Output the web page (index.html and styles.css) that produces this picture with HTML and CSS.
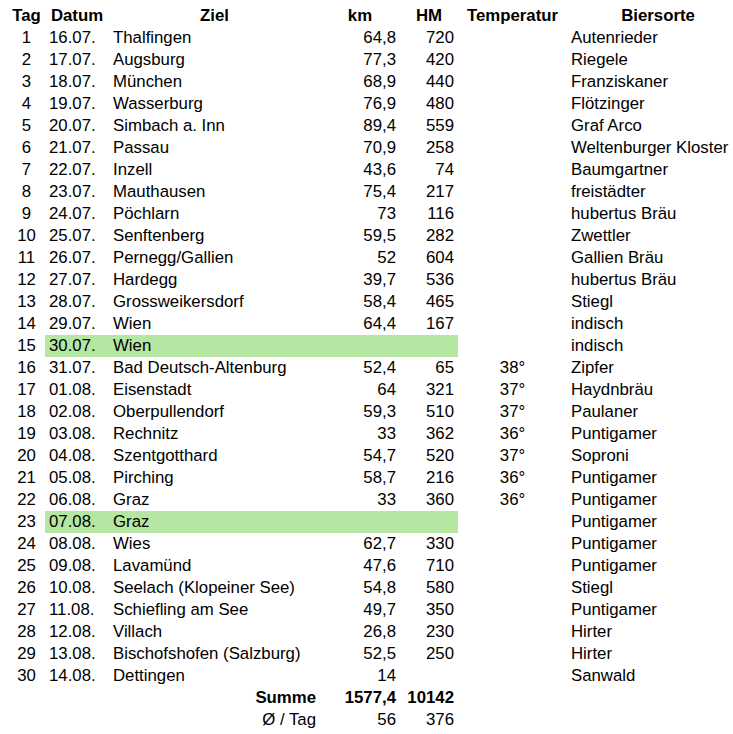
FILE: index.html
```html
<!DOCTYPE html>
<html lang="de">
<head>
<meta charset="utf-8">
<title>Tour</title>
<link rel="stylesheet" href="styles.css">
</head>
<body>
<table class="tour">
<colgroup>
<col class="c-tag"><col class="c-datum"><col class="c-ziel"><col class="c-km"><col class="c-hm"><col class="c-temp"><col class="c-bier">
</colgroup>
<thead>
<tr><th>Tag</th><th>Datum</th><th>Ziel</th><th>km</th><th>HM</th><th>Temperatur</th><th>Biersorte</th></tr>
</thead>
<tbody>
<tr><td class="tag">1</td><td>16.07.</td><td>Thalfingen</td><td class="num">64,8</td><td class="num">720</td><td class="temp"></td><td>Autenrieder</td></tr>
<tr><td class="tag">2</td><td>17.07.</td><td>Augsburg</td><td class="num">77,3</td><td class="num">420</td><td class="temp"></td><td>Riegele</td></tr>
<tr><td class="tag">3</td><td>18.07.</td><td>München</td><td class="num">68,9</td><td class="num">440</td><td class="temp"></td><td>Franziskaner</td></tr>
<tr><td class="tag">4</td><td>19.07.</td><td>Wasserburg</td><td class="num">76,9</td><td class="num">480</td><td class="temp"></td><td>Flötzinger</td></tr>
<tr><td class="tag">5</td><td>20.07.</td><td>Simbach a. Inn</td><td class="num">89,4</td><td class="num">559</td><td class="temp"></td><td>Graf Arco</td></tr>
<tr><td class="tag">6</td><td>21.07.</td><td>Passau</td><td class="num">70,9</td><td class="num">258</td><td class="temp"></td><td>Weltenburger Kloster</td></tr>
<tr><td class="tag">7</td><td>22.07.</td><td>Inzell</td><td class="num">43,6</td><td class="num">74</td><td class="temp"></td><td>Baumgartner</td></tr>
<tr><td class="tag">8</td><td>23.07.</td><td>Mauthausen</td><td class="num">75,4</td><td class="num">217</td><td class="temp"></td><td>freistädter</td></tr>
<tr><td class="tag">9</td><td>24.07.</td><td>Pöchlarn</td><td class="num">73</td><td class="num">116</td><td class="temp"></td><td>hubertus Bräu</td></tr>
<tr><td class="tag">10</td><td>25.07.</td><td>Senftenberg</td><td class="num">59,5</td><td class="num">282</td><td class="temp"></td><td>Zwettler</td></tr>
<tr><td class="tag">11</td><td>26.07.</td><td>Pernegg/Gallien</td><td class="num">52</td><td class="num">604</td><td class="temp"></td><td>Gallien Bräu</td></tr>
<tr><td class="tag">12</td><td>27.07.</td><td>Hardegg</td><td class="num">39,7</td><td class="num">536</td><td class="temp"></td><td>hubertus Bräu</td></tr>
<tr><td class="tag">13</td><td>28.07.</td><td>Grossweikersdorf</td><td class="num">58,4</td><td class="num">465</td><td class="temp"></td><td>Stiegl</td></tr>
<tr><td class="tag">14</td><td>29.07.</td><td>Wien</td><td class="num">64,4</td><td class="num">167</td><td class="temp"></td><td>indisch</td></tr>
<tr class="rest"><td class="tag">15</td><td class="g">30.07.</td><td class="g">Wien</td><td class="g num"></td><td class="g num"></td><td class="temp"></td><td>indisch</td></tr>
<tr><td class="tag">16</td><td>31.07.</td><td>Bad Deutsch-Altenburg</td><td class="num">52,4</td><td class="num">65</td><td class="temp">38°</td><td>Zipfer</td></tr>
<tr><td class="tag">17</td><td>01.08.</td><td>Eisenstadt</td><td class="num">64</td><td class="num">321</td><td class="temp">37°</td><td>Haydnbräu</td></tr>
<tr><td class="tag">18</td><td>02.08.</td><td>Oberpullendorf</td><td class="num">59,3</td><td class="num">510</td><td class="temp">37°</td><td>Paulaner</td></tr>
<tr><td class="tag">19</td><td>03.08.</td><td>Rechnitz</td><td class="num">33</td><td class="num">362</td><td class="temp">36°</td><td>Puntigamer</td></tr>
<tr><td class="tag">20</td><td>04.08.</td><td>Szentgotthard</td><td class="num">54,7</td><td class="num">520</td><td class="temp">37°</td><td>Soproni</td></tr>
<tr><td class="tag">21</td><td>05.08.</td><td>Pirching</td><td class="num">58,7</td><td class="num">216</td><td class="temp">36°</td><td>Puntigamer</td></tr>
<tr><td class="tag">22</td><td>06.08.</td><td>Graz</td><td class="num">33</td><td class="num">360</td><td class="temp">36°</td><td>Puntigamer</td></tr>
<tr class="rest"><td class="tag">23</td><td class="g">07.08.</td><td class="g">Graz</td><td class="g num"></td><td class="g num"></td><td class="temp"></td><td>Puntigamer</td></tr>
<tr><td class="tag">24</td><td>08.08.</td><td>Wies</td><td class="num">62,7</td><td class="num">330</td><td class="temp"></td><td>Puntigamer</td></tr>
<tr><td class="tag">25</td><td>09.08.</td><td>Lavamünd</td><td class="num">47,6</td><td class="num">710</td><td class="temp"></td><td>Puntigamer</td></tr>
<tr><td class="tag">26</td><td>10.08.</td><td>Seelach (Klopeiner See)</td><td class="num">54,8</td><td class="num">580</td><td class="temp"></td><td>Stiegl</td></tr>
<tr><td class="tag">27</td><td>11.08.</td><td>Schiefling am See</td><td class="num">49,7</td><td class="num">350</td><td class="temp"></td><td>Puntigamer</td></tr>
<tr><td class="tag">28</td><td>12.08.</td><td>Villach</td><td class="num">26,8</td><td class="num">230</td><td class="temp"></td><td>Hirter</td></tr>
<tr><td class="tag">29</td><td>13.08.</td><td>Bischofshofen (Salzburg)</td><td class="num">52,5</td><td class="num">250</td><td class="temp"></td><td>Hirter</td></tr>
<tr><td class="tag">30</td><td>14.08.</td><td>Dettingen</td><td class="num">14</td><td class="num"></td><td class="temp"></td><td>Sanwald</td></tr>
<tr class="sum"><td></td><td></td><td class="num">Summe</td><td class="num">1577,4</td><td class="num">10142</td><td></td><td></td></tr>
<tr><td></td><td></td><td class="num">Ø / Tag</td><td class="num">56</td><td class="num">376</td><td></td><td></td></tr>
</tbody>
</table>
</body>
</html>
```
FILE: styles.css
```css
html {
  overflow: hidden;
  background: #ffffff;
}
body {
  margin: 0;
  padding: 5px 0 0 8px;
  font-family: "Liberation Sans", Arial, sans-serif;
  font-size: 16.8px;
  color: #000000;
}
.tour {
  border-collapse: collapse;
  table-layout: fixed;
  width: 741px;
}
.c-tag { width: 37px; }
.c-datum { width: 64px; }
.c-ziel { width: 211px; }
.c-km { width: 80px; }
.c-hm { width: 58px; }
.c-temp { width: 109px; }
.c-bier { width: 182px; }
.tour th,
.tour td {
  height: 22px;
  padding: 0 4px;
  line-height: 22px;
  white-space: nowrap;
  text-align: left;
  vertical-align: middle;
}
.tour th {
  font-weight: bold;
  text-align: center;
}
.tour td.tag,
.tour td.temp {
  text-align: center;
}
.tour td.num {
  text-align: right;
}
.tour td.sumlabel {
  padding-right: 3px;
}
.tour td.g {
  background: #b5e6a2;
}
.sum td {
  font-weight: bold;
}
```
